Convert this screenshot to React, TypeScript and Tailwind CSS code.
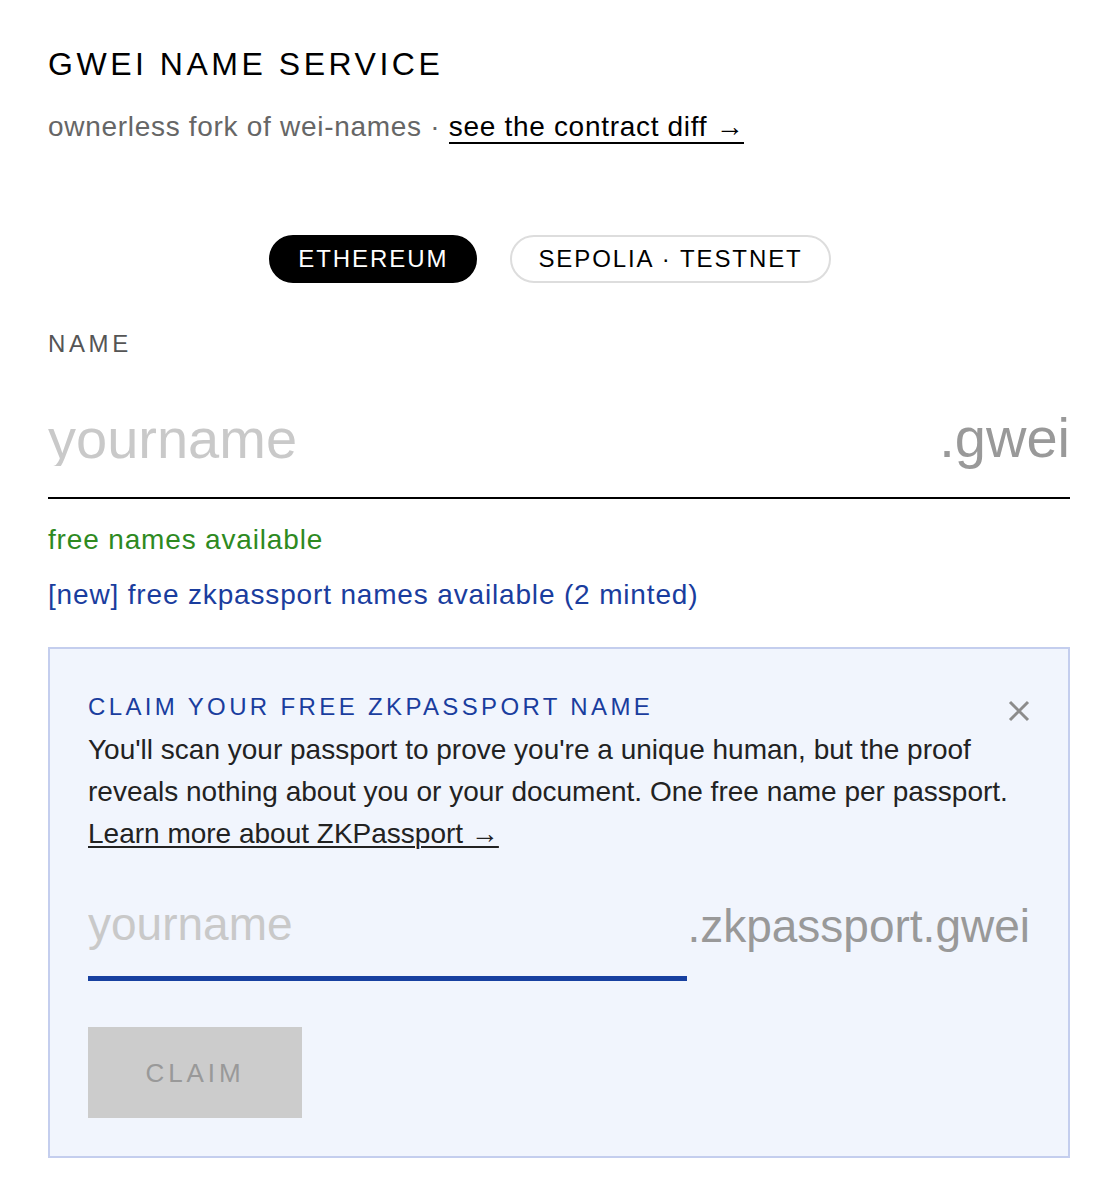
import { useState } from "react";

export default function App() {
  const [net, setNet] = useState("mainnet");
  const [showClaim, setShowClaim] = useState(true);

  return (
    <div className="min-h-screen bg-white font-['Liberation_Sans','Helvetica','Arial',sans-serif] text-[#111]">
      <div className="pl-[48px] pr-[49px] pt-[48px] pb-[40px]">
        {/* Header */}
        <h1 className="text-[32px] leading-none font-normal tracking-[0.11em] text-black">
          GWEI NAME SERVICE
        </h1>
        <div className="mt-[33px] h-[25px] text-[28px] leading-none tracking-[0.025em] text-[#666]">
          ownerless fork of wei-names ·{" "}
          <a href="#" className="inline-block border-b-2 border-black pb-[1px] text-black">
            see the contract diff →
          </a>
        </div>

        {/* Network switch */}
        <div className="mt-[97px] flex justify-center gap-[33px] pr-[18px]">
          <button
            onClick={() => setNet("mainnet")}
            className={
              net === "mainnet"
                ? "h-[48px] rounded-full border-2 border-black bg-black px-[27px] text-[24px] leading-none tracking-[0.08em] text-white"
                : "h-[48px] rounded-full border-2 border-[#dddddd] bg-white px-[27px] text-[24px] leading-none tracking-[0.08em] text-black"
            }
          >
            ETHEREUM
          </button>
          <button
            onClick={() => setNet("sepolia")}
            className={
              net === "sepolia"
                ? "h-[48px] rounded-full border-2 border-black bg-black px-[26px] text-[24px] leading-none tracking-[0.08em] text-white"
                : "h-[48px] rounded-full border-2 border-[#dddddd] bg-white px-[26px] text-[24px] leading-none tracking-[0.08em] text-black"
            }
          >
            SEPOLIA · TESTNET
          </button>
        </div>

        {/* Name input */}
        <div className="mt-[49px] text-[24px] leading-none tracking-[0.15em] text-[#555]">NAME</div>
        <div className="mt-[54px] flex items-start justify-between border-b-2 border-black pb-[31px]">
          <input
            placeholder="yourname"
            className="h-[56px] min-w-0 flex-1 bg-transparent text-[56px] leading-none text-black outline-none placeholder:text-[#c9c9c9]"
          />
          <span className="text-[56px] leading-none text-[#999]">.gwei</span>
        </div>

        <div className="mt-[27px] text-[28px] leading-none tracking-[0.03em] text-[#2e8a1f]">
          free names available
        </div>
        <div className="mt-[27px] text-[28px] leading-none tracking-[0.03em] text-[#1a3d9e]">
          [new] free zkpassport names available (2 minted)
        </div>

        {/* zkpassport claim */}
        {showClaim && (
          <div className="mt-[38px] border-2 border-[#c4ceee] bg-[#f1f5fd] px-[38px] pt-[46px] pb-[38px]">
            <div className="flex items-start justify-between">
              <div className="text-[24px] leading-none tracking-[0.14em] text-[#1a3d9e]">
                CLAIM YOUR FREE ZKPASSPORT NAME
              </div>
              <button onClick={() => setShowClaim(false)} className="mt-[5px] text-[#8c8c8c]">
                <svg width="22" height="22" viewBox="0 0 22 22" fill="none" stroke="currentColor" strokeWidth="3">
                  <path d="M2 2L20 20M20 2L2 20" />
                </svg>
              </button>
            </div>
            <p className="mt-[7px] text-[28px] leading-[42px] text-[#222]">
              You'll scan your passport to prove you're a unique human, but the proof reveals nothing about you
              or your document. One free name per passport.{" "}
              <a href="#" className="underline decoration-2 underline-offset-[3px]">
                Learn more about ZKPassport →
              </a>
            </p>

            <div className="mt-[48px] flex items-start">
              <input
                placeholder="yourname"
                className="h-[78px] min-w-0 flex-1 border-b-[5px] border-[#1740a0] bg-transparent pb-[31px] text-[46px] leading-none text-black outline-none placeholder:text-[#c9c9c9]"
              />
              <span className="text-[46px] leading-none text-[#999]">.zkpassport.gwei</span>
            </div>

            <button
              disabled
              className="mt-[46px] flex h-[91px] w-[214px] items-center justify-center bg-[#cccccc] text-[26px] leading-none tracking-[0.15em] text-[#999]"
            >
              CLAIM
            </button>
          </div>
        )}
      </div>
    </div>
  );
}
